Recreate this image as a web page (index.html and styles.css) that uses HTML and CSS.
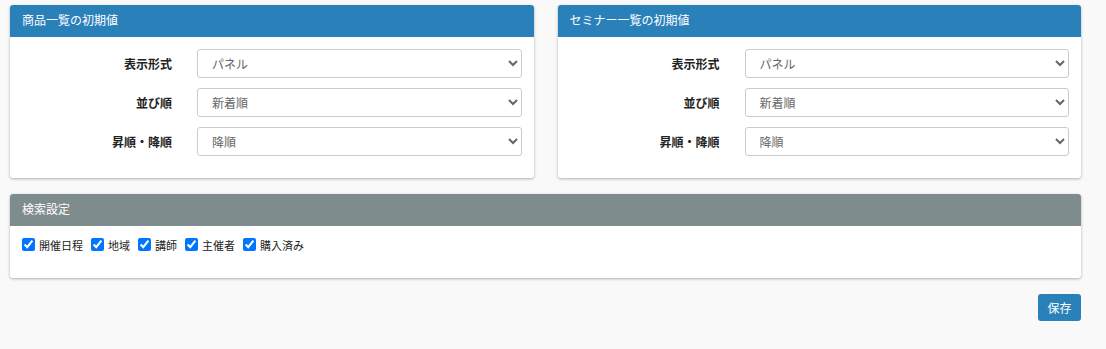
FILE: index.html
```html
<!DOCTYPE html>
<html lang="ja">
<head>
    <meta charset="UTF-8">
    <title>初期値設定</title>
    <link rel="stylesheet" href="styles.css">
</head>
<body>
    <div class="wrap">
        <div class="row">
            <div class="panel">
                <div class="panel-heading">商品一覧の初期値</div>
                <div class="panel-body form-grid">
                    <label>表示形式</label>
                    <select><option>パネル</option></select>
                    <label>並び順</label>
                    <select><option>新着順</option></select>
                    <label>昇順・降順</label>
                    <select><option>降順</option></select>
                </div>
            </div>
            <div class="panel">
                <div class="panel-heading">セミナー一覧の初期値</div>
                <div class="panel-body form-grid">
                    <label>表示形式</label>
                    <select><option>パネル</option></select>
                    <label>並び順</label>
                    <select><option>新着順</option></select>
                    <label>昇順・降順</label>
                    <select><option>降順</option></select>
                </div>
            </div>
        </div>

        <div class="panel">
            <div class="panel-heading gray">検索設定</div>
            <div class="panel-body checks">
                <label><input type="checkbox" checked>開催日程</label>
                <label><input type="checkbox" checked>地域</label>
                <label><input type="checkbox" checked>講師</label>
                <label><input type="checkbox" checked>主催者</label>
                <label><input type="checkbox" checked>購入済み</label>
            </div>
        </div>

        <div class="actions">
            <button class="save-button" type="button">保存</button>
        </div>
    </div>
</body>
</html>
```

FILE: styles.css
```css
body {
    margin: 0;
    background-color: #f9f9f9;
    font-family: "Noto Sans CJK JP", "Liberation Sans", sans-serif;
    font-size: 12px;
    color: #333;
}
.wrap {
    width: 1071px;
    padding: 5px 0 0 10px;
}
.row {
    display: grid;
    grid-template-columns: 1fr 1fr;
    column-gap: 24px;
    margin-bottom: 16px;
}
.panel {
    background-color: #fff;
    border-radius: 3px;
    box-shadow: 0 1px 3px rgba(0, 0, 0, 0.3);
}
.panel-heading {
    height: 32px;
    line-height: 30px;
    padding: 0 12px;
    background-color: #2a80b9;
    color: #fff;
    border-radius: 3px 3px 0 0;
}
.panel-heading.gray {
    background-color: #7f8c8d;
}
.form-grid {
    display: grid;
    grid-template-columns: 162px 1fr;
    column-gap: 25px;
    row-gap: 10px;
    align-items: center;
    padding: 12px 12px 22px 0;
}
.form-grid label {
    text-align: right;
    font-weight: bold;
    color: #222;
}
.form-grid select {
    height: 29px;
    padding: 0 10px;
    font-family: inherit;
    font-size: 12px;
    color: #666;
    background-color: #fff;
    border: 1px solid #ccc;
    border-radius: 3px;
}
.checks {
    display: flex;
    gap: 8px;
    padding: 11px 12px 26px;
    height: 15px;
    font-size: 11px;
}
.checks label {
    display: flex;
    align-items: center;
    gap: 4px;
    color: #222;
}
.checks input {
    margin: 0;
    width: 13px;
    height: 13px;
}
.actions {
    display: flex;
    justify-content: flex-end;
    padding-top: 16px;
}
.save-button {
    width: 43px;
    height: 27px;
    padding: 0;
    font-family: inherit;
    font-size: 12px;
    color: #fff;
    background-color: #2a80b9;
    border: none;
    border-radius: 3px;
}
```
